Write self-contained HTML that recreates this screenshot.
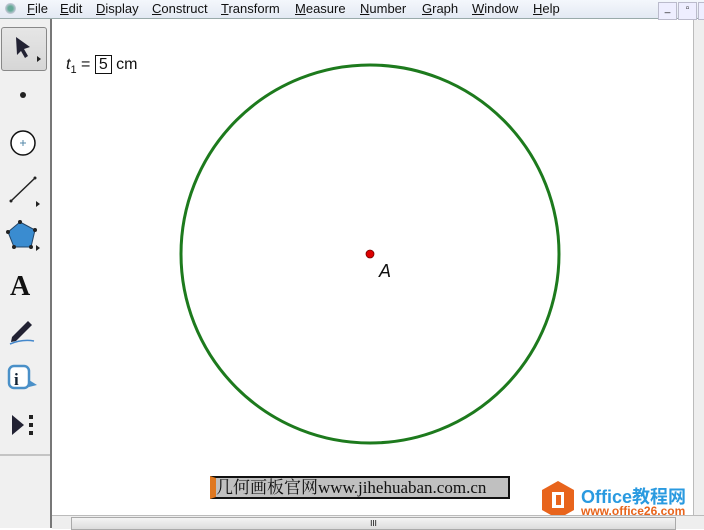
<!DOCTYPE html>
<html><head><meta charset="utf-8"><style>
body{margin:0;width:704px;height:528px;overflow:hidden;background:#fff;position:relative;font-family:"Liberation Sans",sans-serif}
.menu{position:absolute;left:0;top:0;width:704px;height:18px;background:linear-gradient(#f4f7fc,#e3e9f3);border-bottom:1px solid #9aa;font-size:13px;color:#111}
.menu span{position:absolute;top:1px}
.menu u{text-decoration:underline}
.tb{position:absolute;left:0;top:19px;width:50px;height:509px;background:#f0f0f0;border-right:2px solid #777}
.abs{position:absolute}
</style></head><body>
<div class="menu">
<div class="abs" style="left:5px;top:3px;width:11px;height:11px;border-radius:50%;background:radial-gradient(#6a9 30%,#ccd 70%)"></div>
<span style="left:27px"><u>F</u>ile</span>
<span style="left:60px"><u>E</u>dit</span>
<span style="left:96px"><u>D</u>isplay</span>
<span style="left:152px"><u>C</u>onstruct</span>
<span style="left:221px"><u>T</u>ransform</span>
<span style="left:295px"><u>M</u>easure</span>
<span style="left:360px"><u>N</u>umber</span>
<span style="left:422px"><u>G</u>raph</span>
<span style="left:472px"><u>W</u>indow</span>
<span style="left:533px"><u>H</u>elp</span>
<div class="abs" style="left:658px;top:2px;width:17px;height:16px;border:1px solid #bbc;background:#eef;font-size:10px;text-align:center">_</div>
<div class="abs" style="left:678px;top:2px;width:17px;height:16px;border:1px solid #bbc;background:#eef;font-size:10px;text-align:center">▫</div>
<div class="abs" style="left:698px;top:2px;width:10px;height:16px;border:1px solid #bbc;background:#eef"></div>
</div>
<div class="tb">
<div class="abs" style="left:1px;top:8px;width:44px;height:42px;border:1px solid #888;border-radius:3px;background:linear-gradient(#e6e6e6,#d6d6d6)"></div>
<svg class="abs" style="left:0;top:0" width="50" height="509">
<path d="M16 18 L30 28 L24 30 L28 37 L25 39 L21 32 L17 36 Z" fill="#223"/>
<path d="M37 37 l4 3 l-4 3z" fill="#222"/>
<circle cx="23" cy="76" r="3" fill="#222"/>
<circle cx="23" cy="124" r="12" fill="#fff" stroke="#111" stroke-width="1.5"/>
<path d="M20 124h6M23 121v6" stroke="#58a" stroke-width="1"/>
<path d="M11 182 L35 159" stroke="#222" stroke-width="1.5"/>
<circle cx="11" cy="182" r="1.5" fill="#222"/><circle cx="35" cy="159" r="1.5" fill="#222"/>
<path d="M36 182 l4 3 l-4 3z" fill="#222"/>
<path d="M20 203 L35 211 L31 228 L14 228 L8 213 Z" fill="#3a8cd0" stroke="#246" stroke-width="1"/>
<circle cx="20" cy="203" r="2" fill="#222"/><circle cx="35" cy="211" r="2" fill="#222"/><circle cx="31" cy="228" r="2" fill="#222"/><circle cx="14" cy="228" r="2" fill="#222"/><circle cx="8" cy="213" r="2" fill="#222"/>
<path d="M36 226 l4 3 l-4 3z" fill="#222"/>
<text x="10" y="276" font-family="Liberation Serif" font-weight="bold" font-size="28" fill="#111">A</text>
<path d="M12 318 L28 302 L32 306 L16 322 L11 323 Z" fill="#223"/>
<path d="M10 325 Q22 320 34 322" stroke="#48c" stroke-width="1.5" fill="none"/>
<rect x="9" y="347" width="20" height="22" rx="5" fill="#fff" stroke="#4a90c8" stroke-width="2.5"/>
<path d="M29 361 l8 5 l-8 2z" fill="#4a90c8"/>
<text x="14" y="366" font-family="Liberation Serif" font-weight="bold" font-size="17" fill="#123">i</text>
<path d="M12 396 L24 406 L12 416 Z" fill="#223"/>
<rect x="29" y="396" width="4" height="4" fill="#222"/><rect x="29" y="404" width="4" height="4" fill="#222"/><rect x="29" y="412" width="4" height="4" fill="#222"/>
<path d="M0 436 H50" stroke="#999" stroke-width="1"/>
</svg>
</div>
<div class="abs" style="left:66px;top:55px;font-size:16px;line-height:20px;color:#111"><i>t</i><sub style="font-size:11px">1</sub> = <span style="border:1px solid #111;padding:0 3px">5</span> cm</div>
<svg class="abs" style="left:0;top:0" width="704" height="528">
<circle cx="370" cy="254" r="189" fill="none" stroke="#1d7a1d" stroke-width="3"/>
<circle cx="370" cy="254" r="4" fill="#d00" stroke="#700" stroke-width="0.8"/>
</svg>
<div class="abs" style="left:379px;top:261px;font-size:18px;font-style:italic;color:#111">A</div>
<div class="abs" style="left:210px;top:476px;width:292px;height:19px;background:#c0c0c0;border:2px solid #111;border-left:6px solid #e07820;font-family:'Liberation Serif','Noto Serif CJK SC',serif;font-size:17px;line-height:19px;color:#111;white-space:nowrap;overflow:hidden">几何画板官网www.jihehuaban.com.cn</div>
<svg class="abs" style="left:540px;top:480px" width="36" height="40"><path d="M18 1 L34 10 L34 30 L18 39 L2 30 L2 10 Z" fill="#e8641c"/><rect x="12" y="12" width="12" height="16" fill="#fff"/><rect x="16" y="15" width="5" height="10" fill="#e8641c"/></svg>
<div class="abs" style="left:581px;top:483px;font-size:18px;font-weight:bold;color:#2a9ae0;font-family:'Liberation Sans','Noto Sans CJK SC',sans-serif;white-space:nowrap">Office教程网</div>
<div class="abs" style="left:581px;top:504px;font-size:12px;font-weight:bold;color:#e8641c">www.office26.com</div>
<div class="abs" style="left:693px;top:20px;width:11px;height:495px;background:#eee;border-left:1px solid #bbb"></div>
<div class="abs" style="left:52px;top:515px;width:652px;height:13px;background:#eee;border-top:1px solid #bbb"></div>
<div class="abs" style="left:71px;top:517px;width:603px;height:11px;background:linear-gradient(#f4f4f4,#dcdcdc);border:1px solid #aaa;font-size:8px;text-align:center;line-height:11px">III</div>
</body></html>
